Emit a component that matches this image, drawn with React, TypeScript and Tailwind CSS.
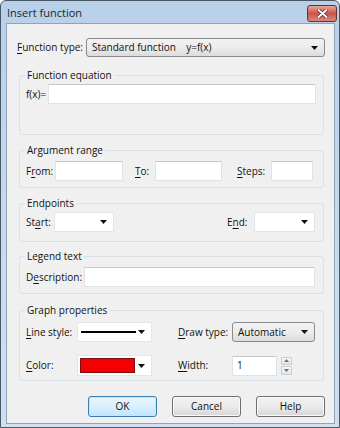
import type { ReactNode } from "react";

const Arrow = () => (
  <svg width="7" height="4" viewBox="0 0 7 4" className="shrink-0">
    <path d="M0 0h7L3.5 4z" fill="#111" />
  </svg>
);

function U({ children }: { children: ReactNode }) {
  return <span className="underline decoration-[1px] underline-offset-[1.5px]">{children}</span>;
}

function Group({ title, className, children }: { title: string; className: string; children: ReactNode }) {
  return (
    <fieldset className={`ml-[12px] mr-[10px] rounded-[3px] border border-[#d9e2e8] ${className}`}>
      <legend className="ml-[5px] px-[2px] text-[10px] leading-[13px] text-[#111]">{title}</legend>
      {children}
    </fieldset>
  );
}

function TextBox({ className, children }: { className: string; children?: ReactNode }) {
  return (
    <div
      className={`flex items-center border border-[#dfe3e8] border-t-[#c4c8ce] bg-white px-[4px] text-[10px] ${className}`}
    >
      {children}
    </div>
  );
}

function Combo({ className, children }: { className: string; children?: ReactNode }) {
  return (
    <div
      className={`flex items-center justify-between rounded-[3px] border border-[#8a8a8a] bg-gradient-to-b from-[#f3f3f3] via-[#ececec] to-[#dcdcdc] pl-[5px] pr-[6px] text-[10px] ${className}`}
    >
      <span>{children}</span>
      <Arrow />
    </div>
  );
}

function DropList({ className, children }: { className: string; children?: ReactNode }) {
  return (
    <div
      className={`flex items-center justify-between border border-[#e2e5e9] bg-white pl-[2px] pr-[6px] ${className}`}
    >
      <div className="flex flex-1 items-center">{children}</div>
      <Arrow />
    </div>
  );
}

function Button({ label, focused }: { label: string; focused?: boolean }) {
  return (
    <div
      className={`flex h-[21px] w-[69px] items-center justify-center rounded-[3px] border text-[10px] ${
        focused
          ? "border-[#3c7fb1] bg-gradient-to-b from-[#eaf6fd] via-[#d9f0fc] to-[#bee6fd] shadow-[inset_0_0_0_1px_#c5e6f8]"
          : "border-[#707070] bg-gradient-to-b from-[#f2f2f2] via-[#ebebeb] to-[#d6d6d6] shadow-[inset_0_0_0_1px_#fafafa]"
      }`}
    >
      {label}
    </div>
  );
}

export default function App() {
  return (
    <div className="h-[428px] w-[340px] bg-white font-['Open_Sans',sans-serif] text-[#111]">
      <div className="flex h-[428px] w-[340px] flex-col rounded-t-[6px] border border-[#4a5866] bg-gradient-to-b from-[#b9d0e9] via-[#c6d9ee] to-[#cfe0f2]">
        <div className="flex h-[22px] items-center justify-between pl-[6px] pr-[2px]">
          <span className="mt-[2px] text-[11px] text-[#1b2530]">Insert function</span>
          <div className="mt-[2px] flex h-[17px] w-[30px] items-center justify-center rounded-[3px] border border-[#6e2f2a] bg-gradient-to-b from-[#e6a89d] via-[#c9534a] to-[#d9897a]">
            <svg width="11" height="9" viewBox="0 0 11 9">
              <path d="M1.5 1l8 7M9.5 1l-8 7" stroke="#5a2020" strokeWidth="3.4" strokeLinecap="round" />
              <path d="M1.5 1l8 7M9.5 1l-8 7" stroke="#fff" strokeWidth="2" strokeLinecap="round" />
            </svg>
          </div>
        </div>

        <div className="mb-[3px] ml-[5px] mr-[4px] flex flex-1 flex-col border border-[#8fa4bb] bg-[#f0f0f0]">
          <div className="mt-[14px] flex items-center pl-[10px] pr-[9px] text-[10px]">
            <span className="w-[69px]">
              <U>F</U>unction type:
            </span>
            <Combo className="h-[19px] flex-1">Standard function&nbsp;&nbsp;&nbsp; y=f(x)</Combo>
          </div>

          <Group title="Function equation" className="mt-[12px] h-[66px]">
            <div className="mt-[2px] flex items-center pl-[6px] pr-[7px] text-[10px]">
              <span className="w-[22px]">f(x)=</span>
              <TextBox className="h-[20px] flex-1" />
            </div>
          </Group>

          <Group title="Argument range" className="mt-[9px] h-[44px]">
            <div className="mt-[4px] flex items-center pl-[6px] text-[10px]">
              <span className="w-[29px]">
                F<U>r</U>om:
              </span>
              <TextBox className="h-[20px] w-[68px]" />
              <span className="ml-[12px] w-[20px]">
                <U>T</U>o:
              </span>
              <TextBox className="h-[20px] w-[67px]" />
              <span className="ml-[15px] w-[34px]">
                <U>S</U>teps:
              </span>
              <TextBox className="h-[20px] w-[42px]" />
            </div>
          </Group>

          <Group title="Endpoints" className="mt-[9px] h-[45px]">
            <div className="mt-[2px] flex items-center justify-between pl-[6px] pr-[8px] text-[10px]">
              <div className="flex items-center">
                <span className="w-[28px]">
                  St<U>a</U>rt:
                </span>
                <DropList className="h-[20px] w-[60px]" />
              </div>
              <div className="flex items-center">
                <span className="w-[27px]">
                  E<U>n</U>d:
                </span>
                <DropList className="h-[20px] w-[61px]" />
              </div>
            </div>
          </Group>

          <Group title="Legend text" className="mt-[8px] h-[44px]">
            <div className="mt-[4px] flex items-center pl-[6px] pr-[8px] text-[10px]">
              <span className="w-[58px]">
                D<U>e</U>scription:
              </span>
              <TextBox className="h-[20px] flex-1" />
            </div>
          </Group>

          <Group title="Graph properties" className="mt-[10px] h-[77px]">
            <div className="mt-[5px] flex items-center pl-[6px] text-[10px]">
              <span className="w-[51px]">
                <U>L</U>ine style:
              </span>
              <DropList className="h-[20px] w-[75px]">
                <div className="ml-[1px] h-[2px] w-[55px] bg-black" />
              </DropList>
              <span className="ml-[26px] w-[54px]">
                <U>D</U>raw type:
              </span>
              <Combo className="h-[20px] w-[83px]">Automatic</Combo>
            </div>
            <div className="mt-[13px] flex items-center pl-[6px] text-[10px]">
              <span className="w-[51px]">
                <U>C</U>olor:
              </span>
              <DropList className="h-[21px] w-[75px]">
                <div className="h-[15px] w-[55px] border border-[#7a1010] bg-[#f40000]" />
              </DropList>
              <span className="ml-[26px] w-[54px]">
                <U>W</U>idth:
              </span>
              <TextBox className="h-[20px] w-[45px]">1</TextBox>
              <div className="ml-[4px] flex h-[18px] w-[11px] flex-col gap-[1px]">
                <div className="flex flex-1 items-center justify-center rounded-[1px] border border-[#c9cdd2] bg-gradient-to-b from-[#f7f7f7] to-[#e4e4e4]">
                  <svg width="5" height="3" viewBox="0 0 5 3">
                    <path d="M0 3h5L2.5 0z" fill="#6a7480" />
                  </svg>
                </div>
                <div className="flex flex-1 items-center justify-center rounded-[1px] border border-[#c9cdd2] bg-gradient-to-b from-[#f7f7f7] to-[#e4e4e4]">
                  <svg width="5" height="3" viewBox="0 0 5 3">
                    <path d="M0 0h5L2.5 3z" fill="#6a7480" />
                  </svg>
                </div>
              </div>
            </div>
          </Group>

          <div className="mt-[15px] flex justify-end gap-[15px] pr-[9px]">
            <Button label="OK" focused />
            <Button label="Cancel" />
            <Button label="Help" />
          </div>
        </div>
      </div>
    </div>
  );
}
